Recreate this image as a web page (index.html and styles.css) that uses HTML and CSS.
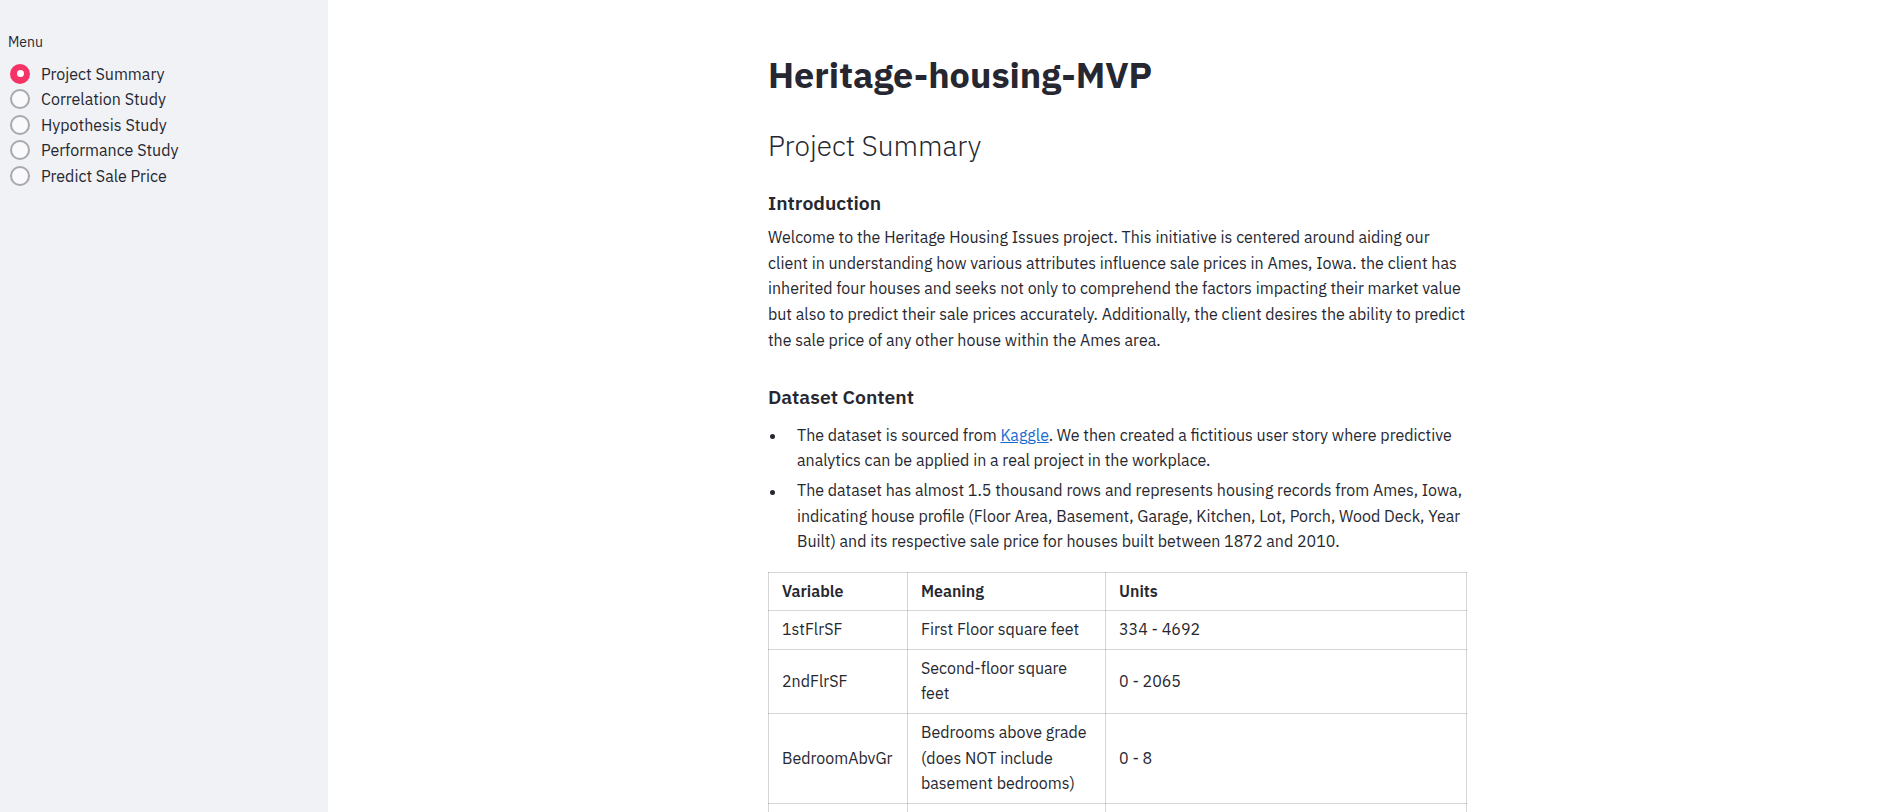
FILE: index.html
```html
<!DOCTYPE html>
<html lang="en">
<head>
<meta charset="utf-8">
<title>Heritage-housing-MVP</title>
<link rel="stylesheet" href="styles.css">
</head>
<body>
<div class="app">
  <aside class="sidebar">
    <div class="menu-label">Menu</div>
    <div class="radio-group">
      <label class="radio checked"><span class="dot"></span><span class="radio-text">Project Summary</span></label>
      <label class="radio"><span class="dot"></span><span class="radio-text">Correlation Study</span></label>
      <label class="radio"><span class="dot"></span><span class="radio-text">Hypothesis Study</span></label>
      <label class="radio"><span class="dot"></span><span class="radio-text">Performance Study</span></label>
      <label class="radio"><span class="dot"></span><span class="radio-text">Predict Sale Price</span></label>
    </div>
  </aside>
  <main class="main">
    <div class="block">
      <h1 class="title">Heritage-housing-MVP</h1>
      <h2 class="page-title">Project Summary</h2>
      <h3 class="section-title first">Introduction</h3>
      <p class="text">Welcome to the Heritage Housing Issues project. This initiative is centered around aiding our client in understanding how various attributes influence sale prices in Ames, Iowa. the client has inherited four houses and seeks not only to comprehend the factors impacting their market value but also to predict their sale prices accurately. Additionally, the client desires the ability to predict the sale price of any other house within the Ames area.</p>
      <h3 class="section-title">Dataset Content</h3>
      <ul class="list">
        <li>The dataset is sourced from <a class="link" href="#">Kaggle</a>. We then created a fictitious user story where predictive analytics can be applied in a real project in the workplace.</li>
        <li>The dataset has almost 1.5 thousand rows and represents housing records from Ames, Iowa, indicating house profile (Floor Area, Basement, Garage, Kitchen, Lot, Porch, Wood Deck, Year Built) and its respective sale price for houses built between 1872 and 2010.</li>
      </ul>
      <table class="data-table">
        <colgroup><col class="c1"><col class="c2"><col class="c3"></colgroup>
        <thead>
          <tr><th>Variable</th><th>Meaning</th><th>Units</th></tr>
        </thead>
        <tbody>
          <tr><td>1stFlrSF</td><td>First Floor square feet</td><td>334 - 4692</td></tr>
          <tr><td>2ndFlrSF</td><td>Second-floor square feet</td><td>0 - 2065</td></tr>
          <tr><td>BedroomAbvGr</td><td>Bedrooms above grade (does NOT include basement bedrooms)</td><td>0 - 8</td></tr>
          <tr><td>BsmtExposure</td><td>Refers to walkout or garden level walls</td><td>Gd: Good Exposure; Av: Average Exposure; Mn: Minimum Exposure; No: No Exposure; None: No Basement</td></tr>
          <tr><td>BsmtFinType1</td><td>Rating of basement finished area</td><td>GLQ: Good Living Quarters; ALQ: Average Living Quarters; BLQ: Below Average Living Quarters; Rec: Average Rec Room; LwQ: Low Quality; Unf: Unfinshed; None: No Basement</td></tr>
        </tbody>
      </table>
    </div>
  </main>
</div>
</body>
</html>
```

FILE: styles.css
```css
html, body {
  margin: 0;
  padding: 0;
}
body {
  font-family: "IBM Plex Sans", Roboto, "Liberation Sans", sans-serif;
  color: #262730;
  background: #ffffff;
}
.app {
  display: flex;
  min-height: 100vh;
}
.sidebar {
  width: 328px;
  flex: none;
  box-sizing: border-box;
  background: #f0f2f6;
  padding: 31px 8px 0 8px;
}
.menu-label {
  font-size: 14px;
  line-height: 22px;
}
.radio-group {
  margin-top: 8px;
  display: flex;
  flex-direction: column;
}
.radio {
  display: flex;
  align-items: center;
  height: 25.5px;
  font-size: 16px;
}
.dot {
  width: 20px;
  height: 20px;
  box-sizing: border-box;
  border-radius: 50%;
  border: 2px solid #a7a8ad;
  background: #f9f9fb;
  margin-left: 2px;
  margin-right: 11px;
  display: flex;
  align-items: center;
  justify-content: center;
}
.radio.checked .dot {
  background: #f63366;
  border-color: #f63366;
}
.radio.checked .dot::after {
  content: "";
  width: 7px;
  height: 7px;
  border-radius: 50%;
  background: #ffffff;
}
.main {
  flex: 1;
  display: flex;
  justify-content: center;
  padding-left: 13px;
}
.block {
  width: 704px;
  padding-top: 52.5px;
  padding-bottom: 40px;
}
.title {
  margin: 0;
  font-size: 36px;
  line-height: 44px;
  font-weight: 700;
}
.page-title {
  margin: 31.7px 0 0;
  font-size: 28px;
  line-height: 36px;
  font-weight: 300;
}
.section-title {
  margin: 30.8px 0 0;
  font-size: 19.4px;
  line-height: 26px;
  font-weight: 600;
}
.section-title.first {
  margin-top: 25.5px;
}
.text {
  margin: 9.5px 0 0;
  font-size: 16px;
  line-height: 25.6px;
}
.list {
  margin: 12.9px 0 0;
  padding-left: 29px;
  list-style: none;
  font-size: 16px;
  line-height: 25.6px;
}
.list li {
  position: relative;
}
.list li::before {
  content: "";
  position: absolute;
  left: -27px;
  top: 11.5px;
  width: 5px;
  height: 5px;
  border-radius: 50%;
  background: currentColor;
}
.list li + li {
  margin-top: 4px;
}
.link {
  color: #1a6bd0;
  text-decoration: underline;
}
.data-table {
  margin-top: 16.8px;
  width: 698px;
  table-layout: fixed;
  border-collapse: collapse;
  font-size: 16px;
  line-height: 25.6px;
}
.c1 { width: 139px; }
.c2 { width: 198px; }
.c3 { width: 361px; }
.data-table th,
.data-table td {
  border: 1px solid rgba(49, 51, 63, 0.2);
  padding: 6px 13px;
  text-align: left;
  vertical-align: middle;
}
.data-table th {
  font-weight: 600;
}
```
